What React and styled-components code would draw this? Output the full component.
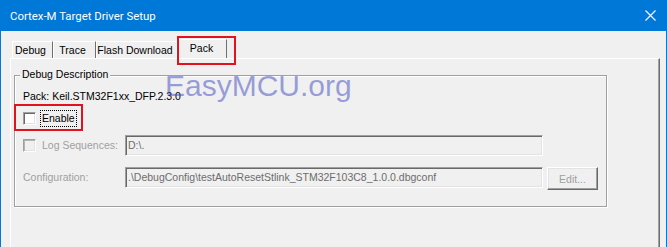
import React from "react";
import styled, { createGlobalStyle } from "styled-components";

const GlobalStyle = createGlobalStyle`
  html, body { margin: 0; padding: 0; background: #f0f0f0; }
  body {
    font-family: "Liberation Sans", Arial, sans-serif;
    font-size: 10.5px;
    color: #000;
  }
  * { box-sizing: border-box; }
`;

const Window = styled.div`
  position: relative;
  width: 667px;
  height: 247px;
  overflow: hidden;
  background: #f0f0f0;
  border-left: 1px solid #0078d7;
  border-right: 1px solid #0078d7;
`;

const TitleBar = styled.div`
  display: flex;
  align-items: center;
  justify-content: space-between;
  height: 31px;
  padding-left: 9px;
  background: #0078d7;
  color: #fff;
  font-family: Roboto, "Segoe UI", sans-serif;
  font-size: 11.4px;
`;

const CloseButton = styled.div`
  width: 31px;
  height: 31px;
  display: flex;
  align-items: center;
  justify-content: center;
`;

const Body = styled.div`
  padding: 8px 6px 0 9px;
`;

const TabStrip = styled.div`
  display: flex;
  align-items: flex-end;
  height: 19px;
  padding-left: 2px;
`;

const Tab = styled.div`
  position: relative;
  width: ${(p) => p.$w}px;
  height: ${(p) => (p.$active ? 19 : 17)}px;
  margin-left: ${(p) => (p.$active ? -2 : 0)}px;
  z-index: ${(p) => (p.$active ? 1 : 0)};
  padding-right: ${(p) => (p.$active ? 0 : 4)}px;
  padding-top: 2px;
  background: #f0f0f0;
  border-top: 1px solid #fff;
  border-left: 1px solid #fff;
  border-right: 1px solid #6f6f6f;
  text-align: center;
  white-space: nowrap;
  line-height: 13px;
`;

const Highlight = styled.div`
  position: absolute;
  left: ${(p) => p.$l}px;
  top: ${(p) => p.$t}px;
  width: ${(p) => p.$w}px;
  height: ${(p) => p.$h}px;
  border: 2px solid #e2131c;
  pointer-events: none;
  z-index: 3;
`;

const Panel = styled.div`
  width: 650px;
  height: 200px;
  border-top: 1px solid #fff;
  border-left: 1px solid #fff;
  border-right: 1px solid #6f6f6f;
  box-shadow: inset -1px 0 0 #a0a0a0;
`;

const Group = styled.div`
  position: relative;
  width: 593px;
  height: 132px;
  margin: 16px 0 0 3px;
  padding: 12px 0 0 8px;
  border: 1px solid #a0a0a0;
  box-shadow: inset 1px 1px 0 #fff, 1px 1px 0 #fff;
`;

const Legend = styled.span`
  position: absolute;
  top: -8px;
  left: 5px;
  padding: 0 2px;
  line-height: 13px;
  background: #f0f0f0;
`;

const Row = styled.div`
  position: relative;
  display: flex;
  align-items: ${(p) => (p.$top ? "flex-start" : "center")};
  height: ${(p) => p.$h}px;
  padding-top: ${(p) => p.$pt || 0}px;
`;

const Text = styled.span`
  color: ${(p) => (p.$disabled ? "#a0a0a0" : "#000")};
  line-height: 13px;
  white-space: nowrap;
`;

const Check = styled.span`
  flex: none;
  width: 13px;
  height: 13px;
  border: 1px solid;
  border-color: #a0a0a0 #fff #fff #a0a0a0;
  box-shadow: inset 1px 1px 0 ${(p) => (p.$disabled ? "#b4b4b4" : "#696969")},
    inset -1px -1px 0 #e3e3e3;
  background: ${(p) => (p.$disabled ? "#f0f0f0" : "#fff")};
`;

const FocusLabel = styled.span`
  margin-left: 4px;
  padding: 1px 1px;
  border: 1px dotted #000;
  line-height: 13px;
`;

const LabelCell = styled.div`
  display: flex;
  align-items: center;
  gap: 6px;
  width: 102px;
  height: 21px;
`;

const Field = styled.div`
  width: 418px;
  height: 21px;
  padding: 3px 0 0 2px;
  border: 1px solid;
  border-color: #a0a0a0 #fff #fff #a0a0a0;
  box-shadow: inset 1px 1px 0 #696969, inset -1px -1px 0 #e3e3e3;
  color: #6d6d6d;
  line-height: 13px;
  white-space: nowrap;
  overflow: hidden;
`;

const Button = styled.div`
  width: 51px;
  height: 23px;
  margin-left: 4px;
  display: flex;
  align-items: center;
  justify-content: center;
  border: 1px solid;
  border-color: #fff #696969 #696969 #fff;
  box-shadow: inset -1px -1px 0 #a0a0a0, inset 1px 1px 0 #e3e3e3;
  color: #a0a0a0;
`;

const Watermark = styled.div`
  position: absolute;
  left: 164px;
  top: 71px;
  font-family: "Liberation Sans", Arial, sans-serif;
  font-size: 30px;
  line-height: 30px;
  color: rgba(60, 72, 190, 0.5);
  pointer-events: none;
  z-index: 2;
`;

export default function App() {
  return (
    <>
      <GlobalStyle />
      <Window>
        <TitleBar>
          <span>Cortex-M Target Driver Setup</span>
          <CloseButton>
            <svg width="11" height="11" viewBox="0 0 11 11">
              <path d="M0.5 0.5 L10.5 10.5 M10.5 0.5 L0.5 10.5" stroke="#fff" strokeWidth="1.1" />
            </svg>
          </CloseButton>
        </TitleBar>
        <Body>
          <TabStrip>
            <Tab $w={41}>Debug</Tab>
            <Tab $w={43}>Trace</Tab>
            <Tab $w={82}>Flash Download</Tab>
            <Tab $w={51} $active>
              Pack
              <Highlight $l={0} $t={-4} $w={59} $h={29} />
            </Tab>
          </TabStrip>
          <Panel>
            <Group>
              <Legend>Debug Description</Legend>
              <Row $h={16}>
                <Text>Pack: Keil.STM32F1xx_DFP.2.3.0</Text>
              </Row>
              <Row $h={26} $pt={3}>
                <Check />
                <FocusLabel>Enable</FocusLabel>
                <Highlight $l={-9} $t={0} $w={69} $h={27} />
              </Row>
              <Row $h={30}>
                <LabelCell>
                  <Check $disabled />
                  <Text $disabled>Log Sequences:</Text>
                </LabelCell>
                <Field>D:\.</Field>
              </Row>
              <Row $h={34} $top $pt={7}>
                <LabelCell>
                  <Text $disabled>Configuration:</Text>
                </LabelCell>
                <Field>.\DebugConfig\testAutoResetStlink_STM32F103C8_1.0.0.dbgconf</Field>
                <Button>Edit...</Button>
              </Row>
            </Group>
          </Panel>
        </Body>
        <Watermark>EasyMCU.org</Watermark>
      </Window>
    </>
  );
}
